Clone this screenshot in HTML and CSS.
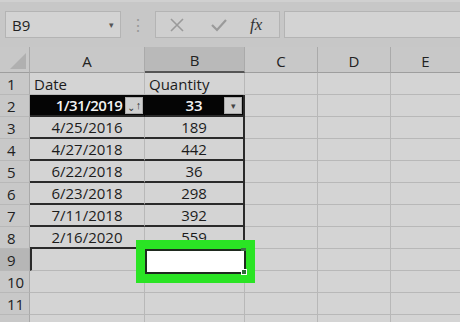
FILE: index.html
```html
<!DOCTYPE html>
<html>
<head>
<meta charset="utf-8">
<link rel="stylesheet" href="styles.css">
</head>
<body>
<div class="toolbar">
  <div class="namebox"><span>B9</span><span class="nb-arrow">▾</span></div>
  <div class="dots">⋮</div>
  <div class="btnbox">
    <svg class="ic" width="16" height="16" viewBox="0 0 16 16"><path d="M2 2 L14 14 M14 2 L2 14" stroke="#9a9a9a" stroke-width="1.6" fill="none"/></svg>
    <svg class="ic" width="18" height="16" viewBox="0 0 18 16"><path d="M2 8 L7 13 L16 3" stroke="#9a9a9a" stroke-width="2.2" fill="none"/></svg>
    <span class="fx">fx</span>
  </div>
  <div class="formula"></div>
</div>
<div class="sheet">
  <div class="corner"><span class="tri"></span></div>
  <div class="ch">A</div>
  <div class="ch sel">B</div>
  <div class="ch">C</div>
  <div class="ch">D</div>
  <div class="ch last">E</div>

  <div class="rh">1</div>
  <div class="c left">Date</div>
  <div class="c left">Quantity</div>
  <div class="c"></div><div class="c"></div><div class="c last"></div>

  <div class="rh">2</div>
  <div class="c hd tb"><span class="shift">1/31/2019</span><span class="fbtn"><span class="sm">⌄</span><span class="up">↑</span></span></div>
  <div class="c hd tr tb">33<span class="fbtn dd">▾</span></div>
  <div class="c"></div><div class="c"></div><div class="c last"></div>

  <div class="rh">3</div>
  <div class="c tb">4/25/2016</div>
  <div class="c tr tb">189</div>
  <div class="c"></div><div class="c"></div><div class="c last"></div>

  <div class="rh">4</div>
  <div class="c tb">4/27/2018</div>
  <div class="c tr tb">442</div>
  <div class="c"></div><div class="c"></div><div class="c last"></div>

  <div class="rh">5</div>
  <div class="c tb">6/22/2018</div>
  <div class="c tr tb">36</div>
  <div class="c"></div><div class="c"></div><div class="c last"></div>

  <div class="rh">6</div>
  <div class="c tb">6/23/2018</div>
  <div class="c tr tb">298</div>
  <div class="c"></div><div class="c"></div><div class="c last"></div>

  <div class="rh">7</div>
  <div class="c tb">7/11/2018</div>
  <div class="c tr tb">392</div>
  <div class="c"></div><div class="c"></div><div class="c last"></div>

  <div class="rh">8</div>
  <div class="c tb">2/16/2020</div>
  <div class="c tr tb">559</div>
  <div class="c"></div><div class="c"></div><div class="c last"></div>

  <div class="rh sel">9</div>
  <div class="c selrow"></div>
  <div class="c"></div>
  <div class="c"></div><div class="c"></div><div class="c last"></div>

  <div class="rh">10</div>
  <div class="c"></div><div class="c"></div><div class="c"></div><div class="c"></div><div class="c last"></div>

  <div class="rh">11</div>
  <div class="c"></div><div class="c"></div><div class="c"></div><div class="c"></div><div class="c last"></div>

  <div class="rh">12</div>
  <div class="c"></div><div class="c"></div><div class="c"></div><div class="c"></div><div class="c last"></div>

  <div class="highlight"><div class="active"><span class="handle"></span><span class="handle2"></span></div></div>
</div>
</body>
</html>
```
FILE: styles.css
```css
* { box-sizing: border-box; }
html, body { margin: 0; padding: 0; }
body {
  width: 460px;
  height: 322px;
  overflow: hidden;
  background: #d2d2d2;
  font-family: "Open Sans", "Noto Sans", sans-serif;
  color: #1c1c1c;
}
.toolbar {
  height: 47px;
  background: #c7c7c7;
  border-top: 2px solid #d0d0d0;
  display: flex;
  align-items: center;
  padding-left: 5px;
}
.namebox {
  width: 116px;
  height: 27px;
  background: #d3d3d3;
  border: 1px solid #b4b4b4;
  display: flex;
  align-items: center;
  justify-content: space-between;
  padding: 0 6px 0 6px;
  font-size: 15px;
  color: #222;
}
.nb-arrow { font-size: 9px; color: #555; }
.dots {
  width: 34px;
  text-align: center;
  color: #999;
  font-size: 16px;
}
.btnbox {
  width: 125px;
  height: 27px;
  background: #cfcfcf;
  border: 1px solid #b4b4b4;
  display: flex;
  align-items: center;
  padding-left: 13px;
}
.btnbox .ic:first-child { margin-right: 25px; }
.btnbox .ic:nth-child(2) { margin-right: 22px; }
.fx {
  font-family: "Liberation Serif", "DejaVu Serif", serif;
  font-style: italic;
  font-size: 17px;
  color: #333;
}
.formula {
  margin-left: 4px;
  flex: 1;
  height: 27px;
  background: #d3d3d3;
  border: 1px solid #b4b4b4;
  border-right: none;
}
.sheet {
  position: relative;
  display: grid;
  grid-template-columns: 30px 115px 100px 73px 73px 1fr;
  grid-template-rows: 26px;
  grid-auto-rows: 22px;
}
.corner {
  background: #c8c8c8;
  border-right: 1px solid #aaa;
  border-bottom: 1px solid #9e9e9e;
  position: relative;
}
.tri {
  position: absolute;
  right: 3px;
  bottom: 3px;
  width: 0; height: 0;
  border-left: 16px solid transparent;
  border-bottom: 16px solid #b0b0b0;
}
.ch {
  background: #c8c8c8;
  border-right: 1px solid #aaa;
  border-bottom: 1px solid #9e9e9e;
  display: flex;
  align-items: center;
  justify-content: center;
  font-size: 15px;
  padding-top: 2px;
  color: #222;
}
.ch.sel { background: #b9b9b9; border-bottom: 2px solid #555; }
.ch.last, .c.last { border-right: none; }
.rh {
  background: #c8c8c8;
  border-right: 1px solid #aaa;
  border-bottom: 1px solid #b8b8b8;
  font-size: 15px;
  padding-left: 7px;
  display: flex;
  align-items: center;
  color: #222;
}
.rh.sel { background: #b6b6b6; }
.c {
  background: #d4d4d4;
  border-right: 1px solid #b8b8b8;
  border-bottom: 1px solid #b8b8b8;
  display: flex;
  align-items: center;
  justify-content: center;
  font-size: 15px;
  position: relative;
  white-space: nowrap;
}
.c.left { justify-content: flex-start; padding-left: 4px; }
.c.tb { border-bottom: 2px solid #2a2a2a; }
.c.tr { border-right: 2px solid #2a2a2a; }
.c.hd {
  background: #050505;
  color: #f2f2f2;
  font-weight: 600;
  border-right-color: #050505;
}
.c.hd.tr { border-right: 2px solid #2a2a2a; }
.shift { letter-spacing: -0.6px; margin-left: 4px; }
.fbtn {
  position: absolute;
  right: 1px;
  top: 2px;
  width: 18px;
  height: 17px;
  background: #cfcfcf;
  border: 1px solid #aaa;
  color: #333;
  font-weight: normal;
  font-size: 11px;
  display: flex;
  align-items: center;
  justify-content: center;
}
.fbtn .sm { font-size: 10px; margin-top: 3px; }
.fbtn .up { font-size: 11px; margin-top: -3px; margin-left: 1px; }
.fbtn.dd { font-size: 9px; color: #444; }
.c.selrow { border-left: 2px solid #2a2a2a; }
.highlight {
  position: absolute;
  left: 136px;
  top: 193px;
  width: 119px;
  height: 43px;
  border: 9px solid #2ae424;
}
.active {
  width: 100%;
  height: 100%;
  background: #ffffff;
  border: 2px solid #1f2a1f;
  position: relative;
}
.handle {
  position: absolute;
  right: -3px;
  bottom: -3px;
  width: 6px;
  height: 6px;
  background: #2f6a3a;
  border: 1px solid #fff;
}
.handle2 {
  position: absolute;
  right: -2px;
  top: -3px;
  width: 5px;
  height: 3px;
  background: #3e6e46;
}
```
